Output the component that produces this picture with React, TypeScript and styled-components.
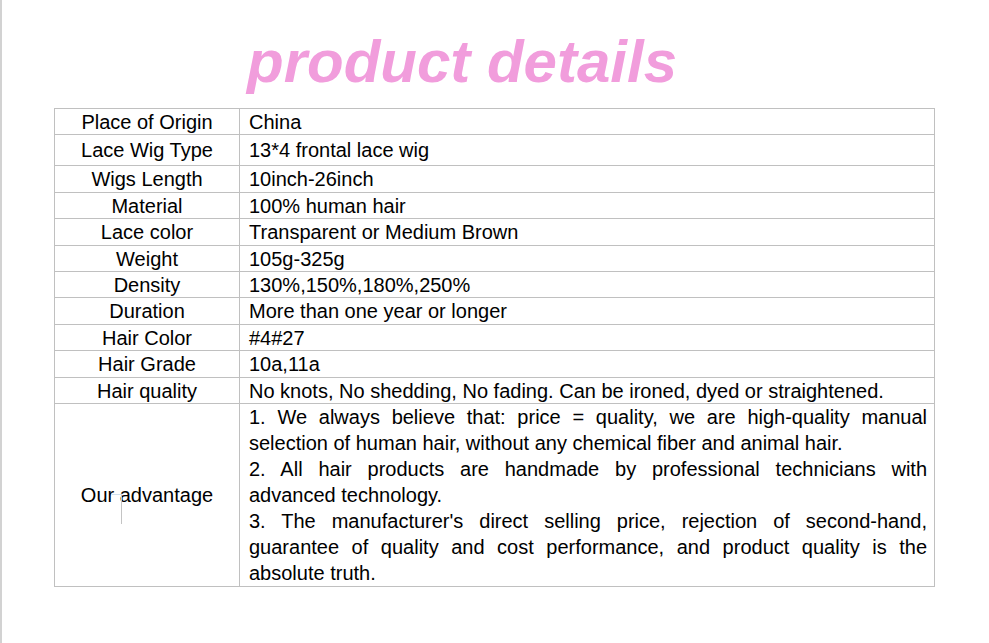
import React from "react";
import styled, { createGlobalStyle } from "styled-components";

const GlobalStyle = createGlobalStyle`
  html, body {
    margin: 0;
    padding: 0;
    background: #ffffff;
  }
  body {
    font-family: "Liberation Sans", Arial, sans-serif;
    color: #000000;
  }
`;

const Page = styled.div`
  min-height: 643px;
  border-left: 2px solid #d2d2d2;
  box-sizing: border-box;
  padding-top: 32px;
`;

const Title = styled.h1`
  margin: 0 0 16px 245px;
  font-family: "Liberation Sans", Arial, sans-serif;
  font-size: 60px;
  line-height: 60px;
  font-weight: 700;
  font-style: italic;
  color: #f19ddc;
`;

const Table = styled.table`
  margin-left: 52px;
  width: 881px;
  border-collapse: collapse;
  font-size: 20px;
  line-height: 22px;
`;

const Cell = styled.td<{ $h?: number }>`
  border: 1px solid #c0c0c0;
  padding: 0;
  vertical-align: middle;
  height: ${(p) => (p.$h ? `${p.$h}px` : "auto")};
  box-sizing: border-box;
`;

const Label = styled(Cell)`
  width: 185px;
  text-align: center;
  position: relative;
`;

const Value = styled(Cell)`
  padding: 0 7px 0 9px;
  text-align: left;
`;

const Para = styled.p`
  margin: 0;
  line-height: 26px;
  text-align: justify;
`;

const Caret = styled.span`
  position: absolute;
  left: 66px;
  top: 90px;
  width: 1px;
  height: 30px;
  background: #c4c4c4;
  &::before {
    content: "";
    position: absolute;
    right: 0;
    top: 0;
    width: 10px;
    height: 1px;
    background: #cfe0ee;
  }
`;

const rows: [string, string, number][] = [
  ["Place of Origin", "China", 26],
  ["Lace Wig Type", "13*4 frontal lace wig", 31],
  ["Wigs Length", "10inch-26inch", 27],
  ["Material", "100% human hair", 26],
  ["Lace color", "Transparent or Medium Brown", 27],
  ["Weight", "105g-325g", 26],
  ["Density", "130%,150%,180%,250%", 26],
  ["Duration", "More than one year or longer", 27],
  ["Hair Color", "#4#27", 26],
  ["Hair Grade", "10a,11a", 27],
  [
    "Hair quality",
    "No knots, No shedding, No fading. Can be ironed, dyed or straightened.",
    26,
  ],
];

const advantages = [
  "1. We always believe that: price = quality, we are high-quality manual selection of human hair, without any chemical fiber and animal hair.",
  "2. All hair products are handmade by professional technicians with advanced technology.",
  "3. The manufacturer's direct selling price, rejection of second-hand, guarantee of quality and cost performance, and product quality is the absolute truth.",
];

export default function App() {
  return (
    <>
      <GlobalStyle />
      <Page>
        <Title>product details</Title>
        <Table>
          <tbody>
            {rows.map(([label, value, h]) => (
              <tr key={label}>
                <Label $h={h}>{label}</Label>
                <Value $h={h}>{value}</Value>
              </tr>
            ))}
            <tr>
              <Label $h={183}>
                Our advantage
                <Caret />
              </Label>
              <Value $h={183}>
                {advantages.map((t) => (
                  <Para key={t}>{t}</Para>
                ))}
              </Value>
            </tr>
          </tbody>
        </Table>
      </Page>
    </>
  );
}
